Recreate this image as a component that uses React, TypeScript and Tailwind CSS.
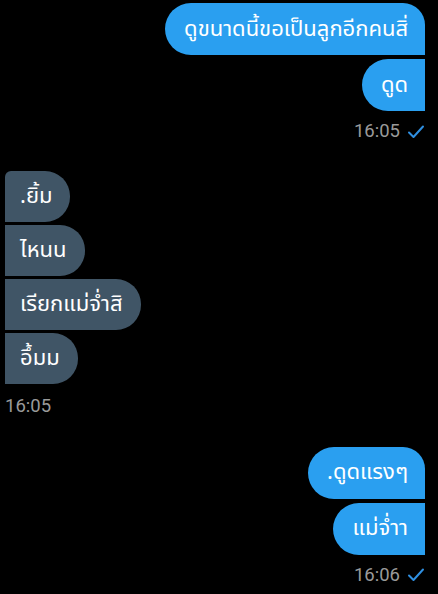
const font = { fontFamily: '"Noto Sans Thai", "Noto Sans", sans-serif' };
const timeFont = { fontFamily: 'Roboto, sans-serif' };

type Msg = { text: string; first?: boolean };

const Check = () => (
  <svg width="18" height="14" viewBox="0 0 18 14" className="ml-[7px]">
    <path d="M2 7.5 L6.5 12 L16 1.5" fill="none" stroke="#2f8fe0" strokeWidth="2" strokeLinecap="round" strokeLinejoin="round" />
  </svg>
);

const OutBubble = ({ text, first }: Msg) => (
  <div
    className={`h-[52px] flex items-center bg-[#2a9ff0] text-white text-[22px] pl-[19px] pr-[17px] rounded-l-[26px] ${
      first ? 'rounded-tr-[22px]' : ''
    }`}
  >
    {text}
  </div>
);

const InBubble = ({ text, first }: Msg) => (
  <div
    className={`h-[51px] flex items-center bg-[#405566] text-white text-[22px] pl-[15px] pr-[18px] rounded-r-[25px] ${
      first ? 'rounded-tl-[6px]' : ''
    }`}
  >
    {text}
  </div>
);

export default function App() {
  return (
    <div className="w-[438px] h-[594px] bg-black overflow-hidden" style={font}>
      <div className="flex flex-col items-end pr-[13px] pt-[3px] gap-[4px]">
        <OutBubble text="ดูขนาดนี้ขอเป็นลูกอีกคนสิ่" first />
        <OutBubble text="ดูด" />
        <div className="flex items-center mt-[3px] text-[18.5px] text-[#9a9a9a]" style={timeFont}>
          16:05
          <Check />
        </div>
      </div>

      <div className="flex flex-col items-start pl-[5px] mt-[25px] gap-[3px]">
        <InBubble text=".ยิ้ม" first />
        <InBubble text="ไหนน" />
        <InBubble text="เรียกแม่จ่ำสิ" />
        <InBubble text="อึ้มม" />
        <div className="mt-[6px] text-[18.5px] text-[#9a9a9a]" style={timeFont}>
          16:05
        </div>
      </div>

      <div className="flex flex-col items-end pr-[13px] mt-[26px] gap-[4px]">
        <OutBubble text=".ดูดแรงๆ" first />
        <OutBubble text="แม่จ่ำา" />
        <div className="flex items-center mt-[3px] text-[18.5px] text-[#9a9a9a]" style={timeFont}>
          16:06
          <Check />
        </div>
      </div>
    </div>
  );
}
